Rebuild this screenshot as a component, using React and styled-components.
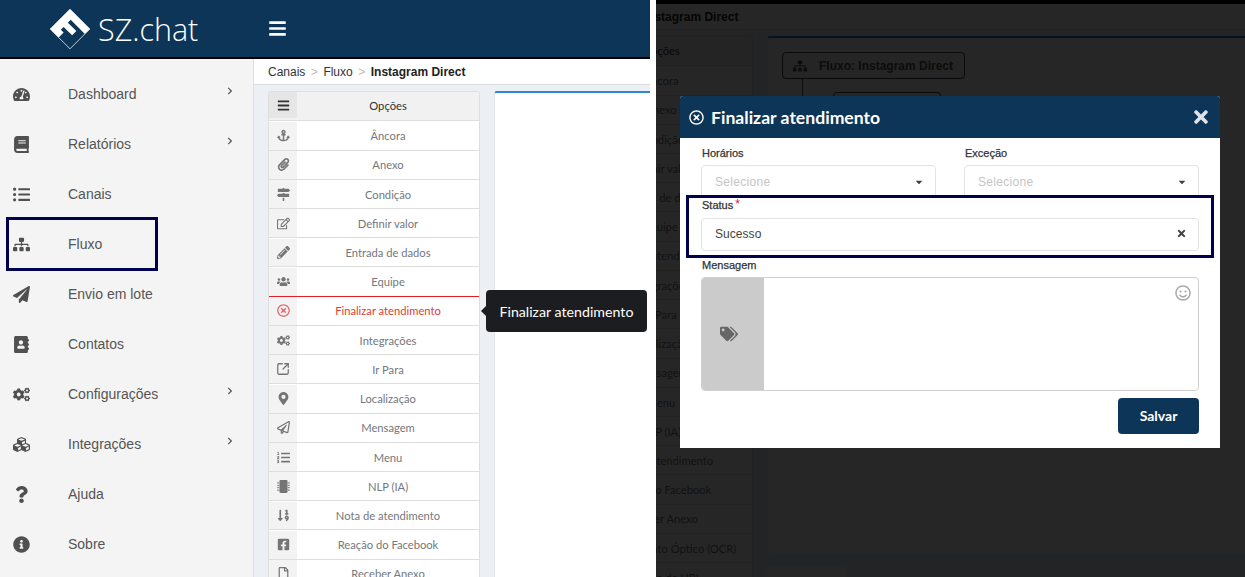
import styled, { createGlobalStyle } from 'styled-components';
import {
  FaTachometerAlt, FaBook, FaListUl, FaSitemap, FaPaperPlane, FaAddressBook, FaCogs, FaCubes,
  FaQuestion, FaInfoCircle, FaChevronRight, FaBars, FaAnchor, FaPaperclip, FaMapSigns, FaRegEdit,
  FaPencilAlt, FaUsers, FaRegTimesCircle, FaMapMarkerAlt, FaRegPaperPlane,
  FaListOl, FaMicrochip, FaSortNumericDown, FaFacebookSquare, FaRegFile, FaTimes, FaCaretDown,
  FaTags, FaRegSmile, FaEye,
} from 'react-icons/fa';
import { SquareArrowOutUpRight } from 'lucide-react';

const navy = '#0d3557';

const GlobalStyle = createGlobalStyle`
  html, body {
    margin: 0;
    padding: 0;
    background: #fff;
    overflow: hidden;
  }
  * {
    box-sizing: border-box;
  }
`;

const Page = styled.div`
  display: flex;
  justify-content: space-between;
  width: 1245px;
  height: 577px;
  overflow: hidden;
  font-family: "Liberation Sans", Arial, sans-serif;
`;

const LeftShot = styled.div`
  display: flex;
  flex-direction: column;
  width: 650px;
  height: 577px;
  overflow: hidden;
  position: relative;
`;

const TopBar = styled.header`
  display: flex;
  flex: none;
  align-items: center;
  height: 59px;
  background: ${navy};
  border-bottom: 2px solid #000;
`;

const Brand = styled.div`
  display: flex;
  align-items: center;
  gap: 7px;
  width: 254px;
  padding-left: 49px;
`;

const BrandName = styled.span`
  font-family: "Open Sans", sans-serif;
  font-weight: 300;
  font-size: 30.5px;
  line-height: 40px;
  color: #fff;
`;

const MenuToggle = styled.div`
  display: flex;
  margin-left: 14px;
  color: #fff;
  font-size: 19px;
`;

const Columns = styled.div`
  display: flex;
  flex: 1;
  min-height: 0;
`;

const Sidebar = styled.nav`
  flex: none;
  width: 254px;
  padding-top: 10px;
  background: #f4f4f4;
  border-right: 1px solid #dcdfe3;
`;

const SideItem = styled.div`
  display: flex;
  align-items: center;
  position: relative;
  height: 50px;
  font-size: 14px;
  color: #555;
`;

const SideIcon = styled.span`
  display: flex;
  justify-content: center;
  flex: none;
  width: 42px;
  font-size: 17px;
  color: #505050;
`;

const SideLabel = styled.span`
  margin-left: 26px;
  flex: 1;
`;

const SideChevron = styled.span`
  display: flex;
  margin: 0 19px 6px 0;
  font-size: 8px;
  color: #555;
`;

const Highlight = styled.div`
  position: absolute;
  border: 3px solid #00004f;
  pointer-events: none;
`;

const SideHighlight = styled(Highlight)`
  top: -2px;
  left: 6px;
  width: 152px;
  height: 54px;
`;

const Workspace = styled.div`
  display: flex;
  flex-direction: column;
  flex: 1;
  min-width: 0;
  flex-shrink: 0;
  margin-left: ${(p) => p.$shift || 0}px;
  background: #ecf0f5;
`;

const Breadcrumb = styled.div`
  display: flex;
  flex: none;
  align-items: center;
  height: 26px;
  padding-left: 14px;
  font-size: 12px;
  white-space: nowrap;
  color: #333;
  background: #fff;
  border-bottom: 1px solid #d9dce0;
`;

const CrumbSep = styled.span`
  display: flex;
  margin: 0 5.5px;
  font-size: 12px;
  font-weight: 400;
  color: #bbb;
`;

const CrumbCurrent = styled.strong`
  color: #222;
`;

const Content = styled.div`
  display: flex;
  flex: 1;
  align-items: flex-start;
  gap: 14px;
  padding: 6px 0 0 14px;
  min-width: 0;
`;

const OptionList = styled.div`
  flex: none;
  width: 212px;
  background: #fff;
  border: 1px solid #dedede;
  border-bottom: none;
  border-radius: 3px 3px 0 0;
  overflow: hidden;
`;

const OptionRow = styled.div`
  display: flex;
  height: ${(p) => (p.$head ? 29.4 : 29.22)}px;
  padding-top: ${(p) => (p.$head ? 0 : 0.3)}px;
  padding-bottom: ${(p) => (p.$head ? 2 : 0)}px;
  font-family: Lato, sans-serif;
  font-size: 11.2px;
  color: ${(p) => (p.$active ? '#dd3b33' : p.$head ? '#333' : '#73787d')};
  border-bottom: 1px solid ${(p) => (p.$redLine ? '#e2202a' : '#dedede')};
  background: ${(p) => (p.$head ? '#f1f1f1' : '#fff')};
`;

const OptionIcon = styled.span`
  display: flex;
  align-items: center;
  justify-content: center;
  flex: none;
  width: 28px;
  font-size: 13px;
  color: ${(p) => (p.$active ? '#e8606a' : p.$head ? '#333' : '#757575')};
  background: ${(p) => (p.$head ? '#e6e6e6' : '#f3f3f3')};
`;

const OptionLabel = styled.span`
  display: flex;
  align-items: center;
  justify-content: center;
  flex: 1;
  white-space: nowrap;
`;

const PanelColumn = styled.div`
  display: flex;
  flex-direction: column;
  flex: 1;
  min-width: 0;
  gap: 14px;
`;

const FlowPanel = styled.div`
  flex: none;
  height: 517px;
  padding: 14px 14px;
  background: #fff;
  border-top: 2px solid #2f86d3;
  border-left: 1px solid #e2e6ea;
  border-radius: 3px 0 0 3px;
`;

const BackBlock = styled.div`
  width: 80px;
  height: 40px;
  background: #fff;
  border-radius: 3px;
`;

const FlowChip = styled.div`
  display: flex;
  align-items: center;
  gap: 12px;
  width: 183px;
  height: 27px;
  padding: 0 10px;
  font-size: 12px;
  font-weight: 700;
  white-space: nowrap;
  color: #555;
  background: #f4f4f4;
  border: 1px solid #444;
  border-radius: 4px;
`;

const FlowBranch = styled.div`
  display: flex;
  align-items: flex-start;
`;

const FlowLink = styled.div`
  flex: none;
  width: 1px;
  height: 40px;
  margin-left: 20px;
  background: #555;
`;

const FlowNode = styled.div`
  flex: none;
  width: 108px;
  height: 40px;
  margin: 13px 0 0 30px;
  border: 1px solid #444;
  border-radius: 4px;
`;

const RightShot = styled.div`
  display: flex;
  position: relative;
  width: 589px;
  height: 577px;
  overflow: hidden;
  background: #ecf0f5;
  border-top: 4px solid #000;
`;

const Dimmer = styled.div`
  position: absolute;
  inset: 0;
  background: rgba(0, 0, 0, 0.85);
`;

const Tooltip = styled.div`
  position: absolute;
  top: 290px;
  left: 486px;
  display: flex;
  align-items: center;
  width: 161px;
  height: 42px;
  padding-left: 13.5px;
  font-family: Lato, sans-serif;
  font-size: 14.2px;
  color: #fff;
  background: #1c1d20;
  border-radius: 4px;

  &::before {
    content: '';
    position: absolute;
    left: -5px;
    top: 16px;
    border-style: solid;
    border-width: 5px 5px 5px 0;
    border-color: transparent #1c1d20 transparent transparent;
  }
`;

const Modal = styled.div`
  position: absolute;
  top: 92px;
  left: 24px;
  width: 540px;
  height: 352px;
  background: #fff;
  border-radius: 3px 3px 0 0;
`;

const ModalHeader = styled.div`
  display: flex;
  align-items: center;
  height: 42px;
  padding: 0 10px;
  color: #fff;
  background: ${navy};
  border-radius: 3px 3px 0 0;
`;

const ModalIcon = styled.span`
  display: flex;
  margin: 0 7px 0 -1px;
  font-size: 15px;
`;

const ModalTitle = styled.h4`
  flex: 1;
  margin: 0;
  font-family: Lato, sans-serif;
  font-size: 17.6px;
  font-weight: 700;
`;

const CloseButton = styled.span`
  display: flex;
  margin-right: -1px;
  font-size: 20px;
  color: #dde3e8;
`;

const ModalBody = styled.div`
  display: flex;
  flex-direction: column;
  padding: 8px 21px 14px;
`;

const FieldRow = styled.div`
  display: grid;
  grid-template-columns: 235px 235px;
  justify-content: space-between;
`;

const Label = styled.label`
  display: block;
  height: 14px;
  margin: ${(p) => p.$mt || 0}px 0 ${(p) => p.$mb || 5}px 1px;
  font-size: 11px;
  line-height: 14px;
  color: #333;
  -webkit-text-stroke: 0.25px #333;
`;

const Required = styled.span`
  margin-left: 2px;
  font-size: 12px;
  line-height: 0;
  vertical-align: 1px;
  color: #e2202a;
  -webkit-text-stroke: 0;
`;

const Control = styled.div`
  display: flex;
  align-items: center;
  justify-content: space-between;
  height: 33px;
  padding: 0 11px ${(p) => (p.$placeholder ? 0 : 2)}px 13px;
  font-size: 12px;
  letter-spacing: ${(p) => (p.$placeholder ? 0.3 : 0.05)}px;
  color: ${(p) => (p.$placeholder ? '#c4c4c4' : '#444')};
  background: #fff;
  border: 1px solid #e3e3e3;
  border-radius: 4px;
`;

const ControlIcon = styled.span`
  display: flex;
  font-size: ${(p) => p.$size || 10}px;
  color: #444;
`;

const MessageBox = styled.div`
  display: flex;
  height: 114px;
  border: 1px solid #d0d0d0;
  border-radius: 4px;
  overflow: hidden;
`;

const TagsAside = styled.div`
  display: flex;
  align-items: center;
  justify-content: center;
  flex: none;
  width: 62px;
  padding-right: 8px;
  font-size: 18px;
  color: #666;
  background: #cbcbcb;
`;

const MessageInput = styled.div`
  display: flex;
  justify-content: flex-end;
  flex: 1;
  padding: 7px;
  font-size: 16px;
  color: #a9a9a9;
`;

const Footer = styled.div`
  display: flex;
  justify-content: flex-end;
  margin-top: 7px;
`;

const SaveButton = styled.button`
  width: 81px;
  height: 36px;
  padding: 0 0 2px;
  font-family: Lato, sans-serif;
  font-size: 14px;
  font-weight: 700;
  color: #fff;
  background: ${navy};
  border: none;
  border-radius: 4px;
`;

const StatusHighlight = styled(Highlight)`
  top: 99px;
  left: 6px;
  width: 528px;
  height: 63px;
`;

// diamond mark: the square is turned 45deg, white band, arm and stem on the outlined square
const Logo = () => (
  <svg width="42" height="42" viewBox="0 0 42 42" style={{ flex: 'none' }}>
    <g transform="rotate(45 21 21)">
      <rect x="7" y="7" width="28" height="28" fill="none" stroke="#fff" strokeWidth="0.7" />
      <path fill="#fff" d="M7 7h28v7H15v4h12v6H15v4h4v7H7z" />
    </g>
  </svg>
);

const sideItems = [
  { label: 'Dashboard', icon: <FaTachometerAlt />, more: true },
  { label: 'Relatórios', icon: <FaBook />, more: true },
  { label: 'Canais', icon: <FaListUl /> },
  { label: 'Fluxo', icon: <FaSitemap />, marked: true },
  { label: 'Envio em lote', icon: <FaPaperPlane /> },
  { label: 'Contatos', icon: <FaAddressBook /> },
  { label: 'Configurações', icon: <FaCogs />, more: true },
  { label: 'Integrações', icon: <FaCubes />, more: true },
  { label: 'Ajuda', icon: <FaQuestion /> },
  { label: 'Sobre', icon: <FaInfoCircle /> },
];

const options = [
  { label: 'Âncora', icon: <FaAnchor /> },
  { label: 'Anexo', icon: <FaPaperclip /> },
  { label: 'Condição', icon: <FaMapSigns /> },
  { label: 'Definir valor', icon: <FaRegEdit /> },
  { label: 'Entrada de dados', icon: <FaPencilAlt /> },
  { label: 'Equipe', icon: <FaUsers /> },
  { label: 'Finalizar atendimento', icon: <FaRegTimesCircle /> },
  { label: 'Integrações', icon: <FaCogs /> },
  { label: 'Ir Para', icon: <SquareArrowOutUpRight size={14} strokeWidth={2.2} /> },
  { label: 'Localização', icon: <FaMapMarkerAlt /> },
  { label: 'Mensagem', icon: <FaRegPaperPlane /> },
  { label: 'Menu', icon: <FaListOl /> },
  { label: 'NLP (IA)', icon: <FaMicrochip /> },
  { label: 'Nota de atendimento', icon: <FaSortNumericDown /> },
  { label: 'Reação do Facebook', icon: <FaFacebookSquare /> },
  { label: 'Receber Anexo', icon: <FaRegFile /> },
  { label: 'Reconhecimento Óptico (OCR)', icon: <FaEye /> },
  { label: 'Redução de URL', icon: <FaRegFile /> },
];

const WorkArea = ({ shift, showFlow, hovered }) => (
  <Workspace $shift={shift}>
    <Breadcrumb>
      Canais
      <CrumbSep>&gt;</CrumbSep>
      Fluxo
      <CrumbSep>&gt;</CrumbSep>
      <CrumbCurrent>Instagram Direct</CrumbCurrent>
    </Breadcrumb>
    <Content>
      <OptionList>
        <OptionRow $head>
          <OptionIcon $head><FaBars /></OptionIcon>
          <OptionLabel>Opções</OptionLabel>
        </OptionRow>
        {options.map((o, i) => {
          const active = o.label === hovered;
          const beforeActive = options[i + 1] && options[i + 1].label === hovered;
          return (
            <OptionRow key={o.label} $active={active} $redLine={beforeActive}>
              <OptionIcon $active={active}>{o.icon}</OptionIcon>
              <OptionLabel>{o.label}</OptionLabel>
            </OptionRow>
          );
        })}
      </OptionList>
      <PanelColumn>
        <FlowPanel>
          {showFlow && (
            <>
              <FlowChip><FaSitemap size={14} /> Fluxo: Instagram Direct</FlowChip>
              <FlowBranch>
                <FlowLink />
                <FlowNode />
              </FlowBranch>
            </>
          )}
        </FlowPanel>
        {showFlow && <BackBlock />}
      </PanelColumn>
    </Content>
  </Workspace>
);

export default function App() {
  return (
    <Page>
      <GlobalStyle />
      <LeftShot>
        <TopBar>
          <Brand>
            <Logo />
            <BrandName>SZ.chat</BrandName>
          </Brand>
          <MenuToggle><FaBars /></MenuToggle>
        </TopBar>
        <Columns>
          <Sidebar>
            {sideItems.map((item) => (
              <SideItem key={item.label}>
                <SideIcon>{item.icon}</SideIcon>
                <SideLabel>{item.label}</SideLabel>
                {item.more && <SideChevron><FaChevronRight /></SideChevron>}
                {item.marked && <SideHighlight />}
              </SideItem>
            ))}
          </Sidebar>
          <WorkArea hovered="Finalizar atendimento" />
        </Columns>
        <Tooltip>Finalizar atendimento</Tooltip>
      </LeftShot>

      <RightShot>
        <WorkArea shift={-129} showFlow />
        <Dimmer />
        <Modal>
          <ModalHeader>
            <ModalIcon><FaRegTimesCircle /></ModalIcon>
            <ModalTitle>Finalizar atendimento</ModalTitle>
            <CloseButton><FaTimes /></CloseButton>
          </ModalHeader>
          <ModalBody>
            <FieldRow>
              <div>
                <Label>Horários</Label>
                <Control $placeholder>
                  Selecione
                  <ControlIcon><FaCaretDown /></ControlIcon>
                </Control>
              </div>
              <div>
                <Label>Exceção</Label>
                <Control $placeholder>
                  Selecione
                  <ControlIcon><FaCaretDown /></ControlIcon>
                </Control>
              </div>
            </FieldRow>
            <Label $mb={6}>Status<Required>*</Required></Label>
            <Control>
              Sucesso
              <ControlIcon $size={11}><FaTimes /></ControlIcon>
            </Control>
            <Label $mt={7}>Mensagem</Label>
            <MessageBox>
              <TagsAside><FaTags /></TagsAside>
              <MessageInput><FaRegSmile /></MessageInput>
            </MessageBox>
            <Footer>
              <SaveButton>Salvar</SaveButton>
            </Footer>
          </ModalBody>
          <StatusHighlight />
        </Modal>
      </RightShot>
    </Page>
  );
}
